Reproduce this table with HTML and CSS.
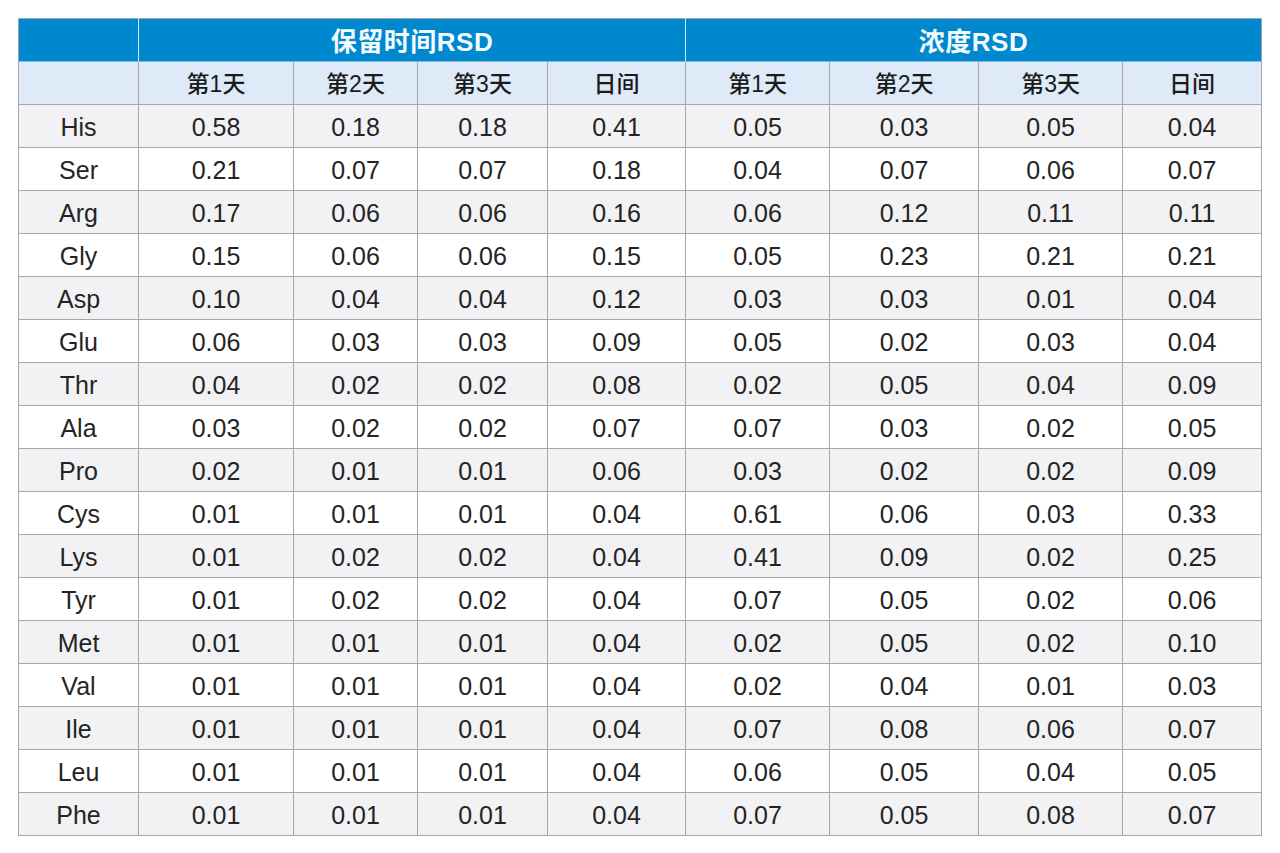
FILE: index.html
```html
<!DOCTYPE html>
<html lang="zh">
<head>
<meta charset="utf-8">
<title>RSD</title>
<link rel="stylesheet" href="styles.css">
</head>
<body>
<table class="rsd">
  <colgroup>
    <col class="c0"><col class="c1"><col class="c2"><col class="c3"><col class="c4">
    <col class="c5"><col class="c6"><col class="c7"><col class="c8">
  </colgroup>
  <thead>
    <tr class="top">
      <th></th>
      <th colspan="4">保留时间RSD</th>
      <th colspan="4">浓度RSD</th>
    </tr>
    <tr class="sub">
      <th></th>
      <th>第1天</th><th>第2天</th><th>第3天</th><th>日间</th>
      <th>第1天</th><th>第2天</th><th>第3天</th><th>日间</th>
    </tr>
  </thead>
  <tbody>
    <tr><td>His</td><td>0.58</td><td>0.18</td><td>0.18</td><td>0.41</td><td>0.05</td><td>0.03</td><td>0.05</td><td>0.04</td></tr>
    <tr><td>Ser</td><td>0.21</td><td>0.07</td><td>0.07</td><td>0.18</td><td>0.04</td><td>0.07</td><td>0.06</td><td>0.07</td></tr>
    <tr><td>Arg</td><td>0.17</td><td>0.06</td><td>0.06</td><td>0.16</td><td>0.06</td><td>0.12</td><td>0.11</td><td>0.11</td></tr>
    <tr><td>Gly</td><td>0.15</td><td>0.06</td><td>0.06</td><td>0.15</td><td>0.05</td><td>0.23</td><td>0.21</td><td>0.21</td></tr>
    <tr><td>Asp</td><td>0.10</td><td>0.04</td><td>0.04</td><td>0.12</td><td>0.03</td><td>0.03</td><td>0.01</td><td>0.04</td></tr>
    <tr><td>Glu</td><td>0.06</td><td>0.03</td><td>0.03</td><td>0.09</td><td>0.05</td><td>0.02</td><td>0.03</td><td>0.04</td></tr>
    <tr><td>Thr</td><td>0.04</td><td>0.02</td><td>0.02</td><td>0.08</td><td>0.02</td><td>0.05</td><td>0.04</td><td>0.09</td></tr>
    <tr><td>Ala</td><td>0.03</td><td>0.02</td><td>0.02</td><td>0.07</td><td>0.07</td><td>0.03</td><td>0.02</td><td>0.05</td></tr>
    <tr><td>Pro</td><td>0.02</td><td>0.01</td><td>0.01</td><td>0.06</td><td>0.03</td><td>0.02</td><td>0.02</td><td>0.09</td></tr>
    <tr><td>Cys</td><td>0.01</td><td>0.01</td><td>0.01</td><td>0.04</td><td>0.61</td><td>0.06</td><td>0.03</td><td>0.33</td></tr>
    <tr><td>Lys</td><td>0.01</td><td>0.02</td><td>0.02</td><td>0.04</td><td>0.41</td><td>0.09</td><td>0.02</td><td>0.25</td></tr>
    <tr><td>Tyr</td><td>0.01</td><td>0.02</td><td>0.02</td><td>0.04</td><td>0.07</td><td>0.05</td><td>0.02</td><td>0.06</td></tr>
    <tr><td>Met</td><td>0.01</td><td>0.01</td><td>0.01</td><td>0.04</td><td>0.02</td><td>0.05</td><td>0.02</td><td>0.10</td></tr>
    <tr><td>Val</td><td>0.01</td><td>0.01</td><td>0.01</td><td>0.04</td><td>0.02</td><td>0.04</td><td>0.01</td><td>0.03</td></tr>
    <tr><td>Ile</td><td>0.01</td><td>0.01</td><td>0.01</td><td>0.04</td><td>0.07</td><td>0.08</td><td>0.06</td><td>0.07</td></tr>
    <tr><td>Leu</td><td>0.01</td><td>0.01</td><td>0.01</td><td>0.04</td><td>0.06</td><td>0.05</td><td>0.04</td><td>0.05</td></tr>
    <tr><td>Phe</td><td>0.01</td><td>0.01</td><td>0.01</td><td>0.04</td><td>0.07</td><td>0.05</td><td>0.08</td><td>0.07</td></tr>
  </tbody>
</table>
</body>
</html>
```

FILE: styles.css
```css
html, body {
  margin: 0;
  padding: 0;
  background: #ffffff;
}

body {
  padding: 18px 0 0 18px;
  font-family: "Liberation Sans", Arial, "Noto Sans CJK SC", sans-serif;
  color: #242424;
}

.rsd {
  border-collapse: collapse;
  table-layout: fixed;
  width: 1243px;
}

.c0 { width: 120px; }
.c1 { width: 155px; }
.c2 { width: 124px; }
.c3 { width: 130px; }
.c4 { width: 138px; }
.c5 { width: 144px; }
.c6 { width: 149px; }
.c7 { width: 144px; }
.c8 { width: 139px; }

.rsd th,
.rsd td {
  border: 1px solid #a7a7a9;
  text-align: center;
  vertical-align: middle;
  padding: 3px 0 0 0;
  height: 39px;
  line-height: 1;
}

.rsd td {
  font-size: 25px;
}

.top th {
  background: #0088cf;
  color: #f4fbff;
  font-weight: bold;
  font-size: 26px;
  letter-spacing: 0.5px;
  border-left-color: #cfeefc;
  border-right-color: #cfeefc;
  border-bottom-color: #7bb8de;
}

.top th:first-child {
  border-left-color: #a7a7a9;
}

.top th:last-child {
  border-right-color: #a7a7a9;
}

.sub th {
  background: #deeaf7;
  color: #1a1a1a;
  font-weight: 500;
  font-size: 23px;
}

.rsd tbody tr:nth-child(odd) td {
  background: #f2f2f4;
}

.rsd tbody tr:nth-child(even) td {
  background: #ffffff;
}
```
